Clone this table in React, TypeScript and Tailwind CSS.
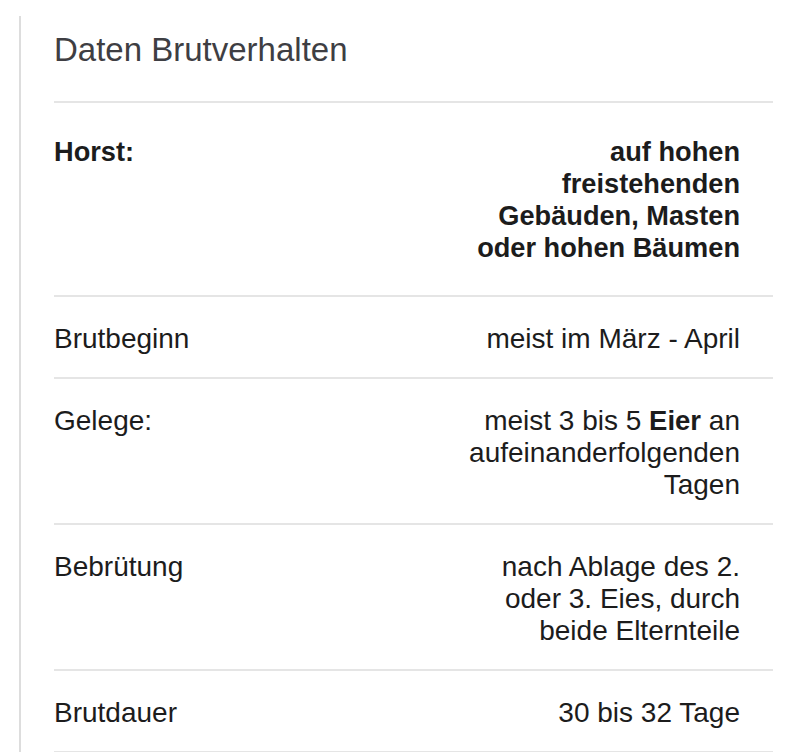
import React from "react";

type Row = { label: React.ReactNode; value: React.ReactNode; bold?: boolean; first?: boolean };

const rows: Row[] = [
  {
    label: "Horst:",
    value: "auf hohen freistehenden Gebäuden, Masten oder hohen Bäumen",
    bold: true,
    first: true,
  },
  { label: "Brutbeginn", value: "meist im März - April" },
  {
    label: "Gelege:",
    value: (
      <>
        meist 3 bis 5 <span className="font-bold text-[27.5px]">Eier</span> an aufeinanderfolgenden Tagen
      </>
    ),
  },
  { label: "Bebrütung", value: "nach Ablage des 2. oder 3. Eies, durch beide Elternteile" },
  { label: "Brutdauer", value: "30 bis 32 Tage" },
];

export default function App() {
  return (
    <div className="min-h-[752px] bg-white pt-[16px] pl-[19px] text-[#1c1c1c] antialiased font-['Liberation_Sans',Arial,Helvetica,sans-serif]">
      <div className="border-l-2 border-[#dddddd] pl-[33px] pr-[23px] pt-[14px] min-h-[736px]">
        <h2 className="text-[33px] leading-[40px] text-[#3e3e43] font-normal mb-[31px]">
          Daten Brutverhalten
        </h2>
        <div className="border-t-2 border-[#e5e5e5]">
          {rows.map((r, i) => (
            <div
              key={i}
              className={`flex items-start border-b-2 border-[#e5e5e5] pr-[33px] leading-[32px] ${
                r.first ? "pt-[33px] pb-[31px]" : "pt-[26px] pb-[22px]"
              } ${r.bold ? "font-bold text-[27.2px]" : "font-normal text-[28px]"}`}
            >
              <div className="flex-1">{r.label}</div>
              <div className="w-[282px] text-right">{r.value}</div>
            </div>
          ))}
        </div>
      </div>
    </div>
  );
}
